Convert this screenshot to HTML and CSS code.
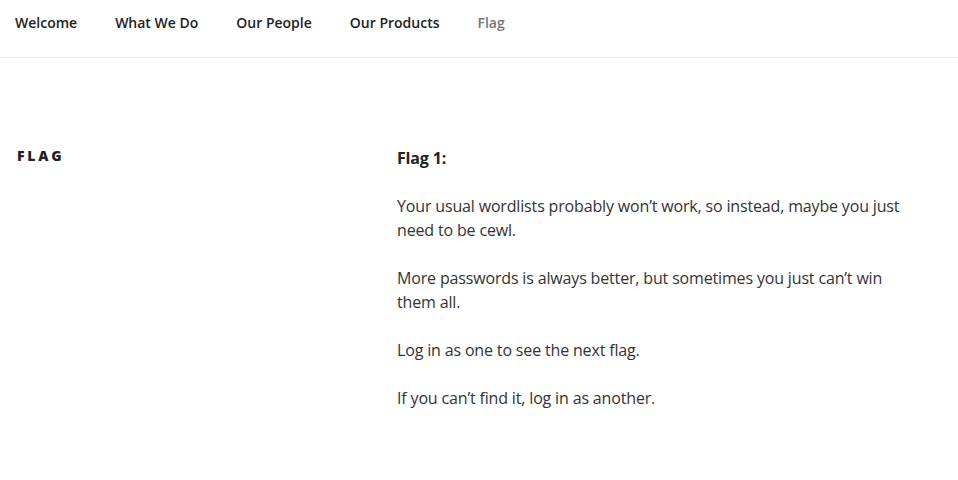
FILE: index.html
```html
<!DOCTYPE html>
<html lang="en">
<head>
<meta charset="utf-8">
<title>Flag</title>
<link rel="stylesheet" href="styles.css">
</head>
<body>
<nav class="site-nav">
  <ul class="menu">
    <li><a href="#">Welcome</a></li>
    <li><a href="#">What We Do</a></li>
    <li><a href="#">Our People</a></li>
    <li><a href="#">Our Products</a></li>
    <li class="current"><a href="#">Flag</a></li>
  </ul>
</nav>
<main class="page">
  <header class="entry-header">
    <h1 class="entry-title">Flag</h1>
  </header>
  <div class="entry-content">
    <p><strong>Flag 1:</strong></p>
    <p>Your usual wordlists probably won’t work, so instead, maybe you just need to be cewl.</p>
    <p>More passwords is always better, but sometimes you just can’t win them all.</p>
    <p>Log in as one to see the next flag.</p>
    <p>If you can’t find it, log in as another.</p>
  </div>
</main>
</body>
</html>
```
FILE: styles.css
```css
html, body {
  margin: 0;
  padding: 0;
  background: #fff;
}
body {
  font-family: "Open Sans", "Liberation Sans", sans-serif;
  color: #333;
  font-size: 16px;
  line-height: 1.5;
}
.site-nav {
  height: 57px;
  border-bottom: 1px solid #eee;
  display: flex;
  align-items: center;
}
.menu {
  list-style: none;
  margin: 0;
  padding: 0 0 13px 15px;
  display: flex;
  gap: 38px;
}
.menu a {
  font-size: 14px;
  font-weight: 600;
  color: #222;
  text-decoration: none;
  line-height: 20px;
}
.menu .current a {
  color: #767676;
}
.page {
  display: flex;
  padding: 88px 17px 0 17px;
}
.entry-header {
  width: 380px;
  flex: none;
}
.entry-title {
  margin: 0;
  font-size: 14px;
  font-weight: 800;
  letter-spacing: 0.2em;
  text-transform: uppercase;
  color: #222;
  line-height: 20px;
}
.entry-content {
  width: 525px;
  letter-spacing: -0.01em;
}
.entry-content p {
  margin: 0 0 24px 0;
}
.entry-content strong {
  font-weight: 700;
  color: #222;
}
```
